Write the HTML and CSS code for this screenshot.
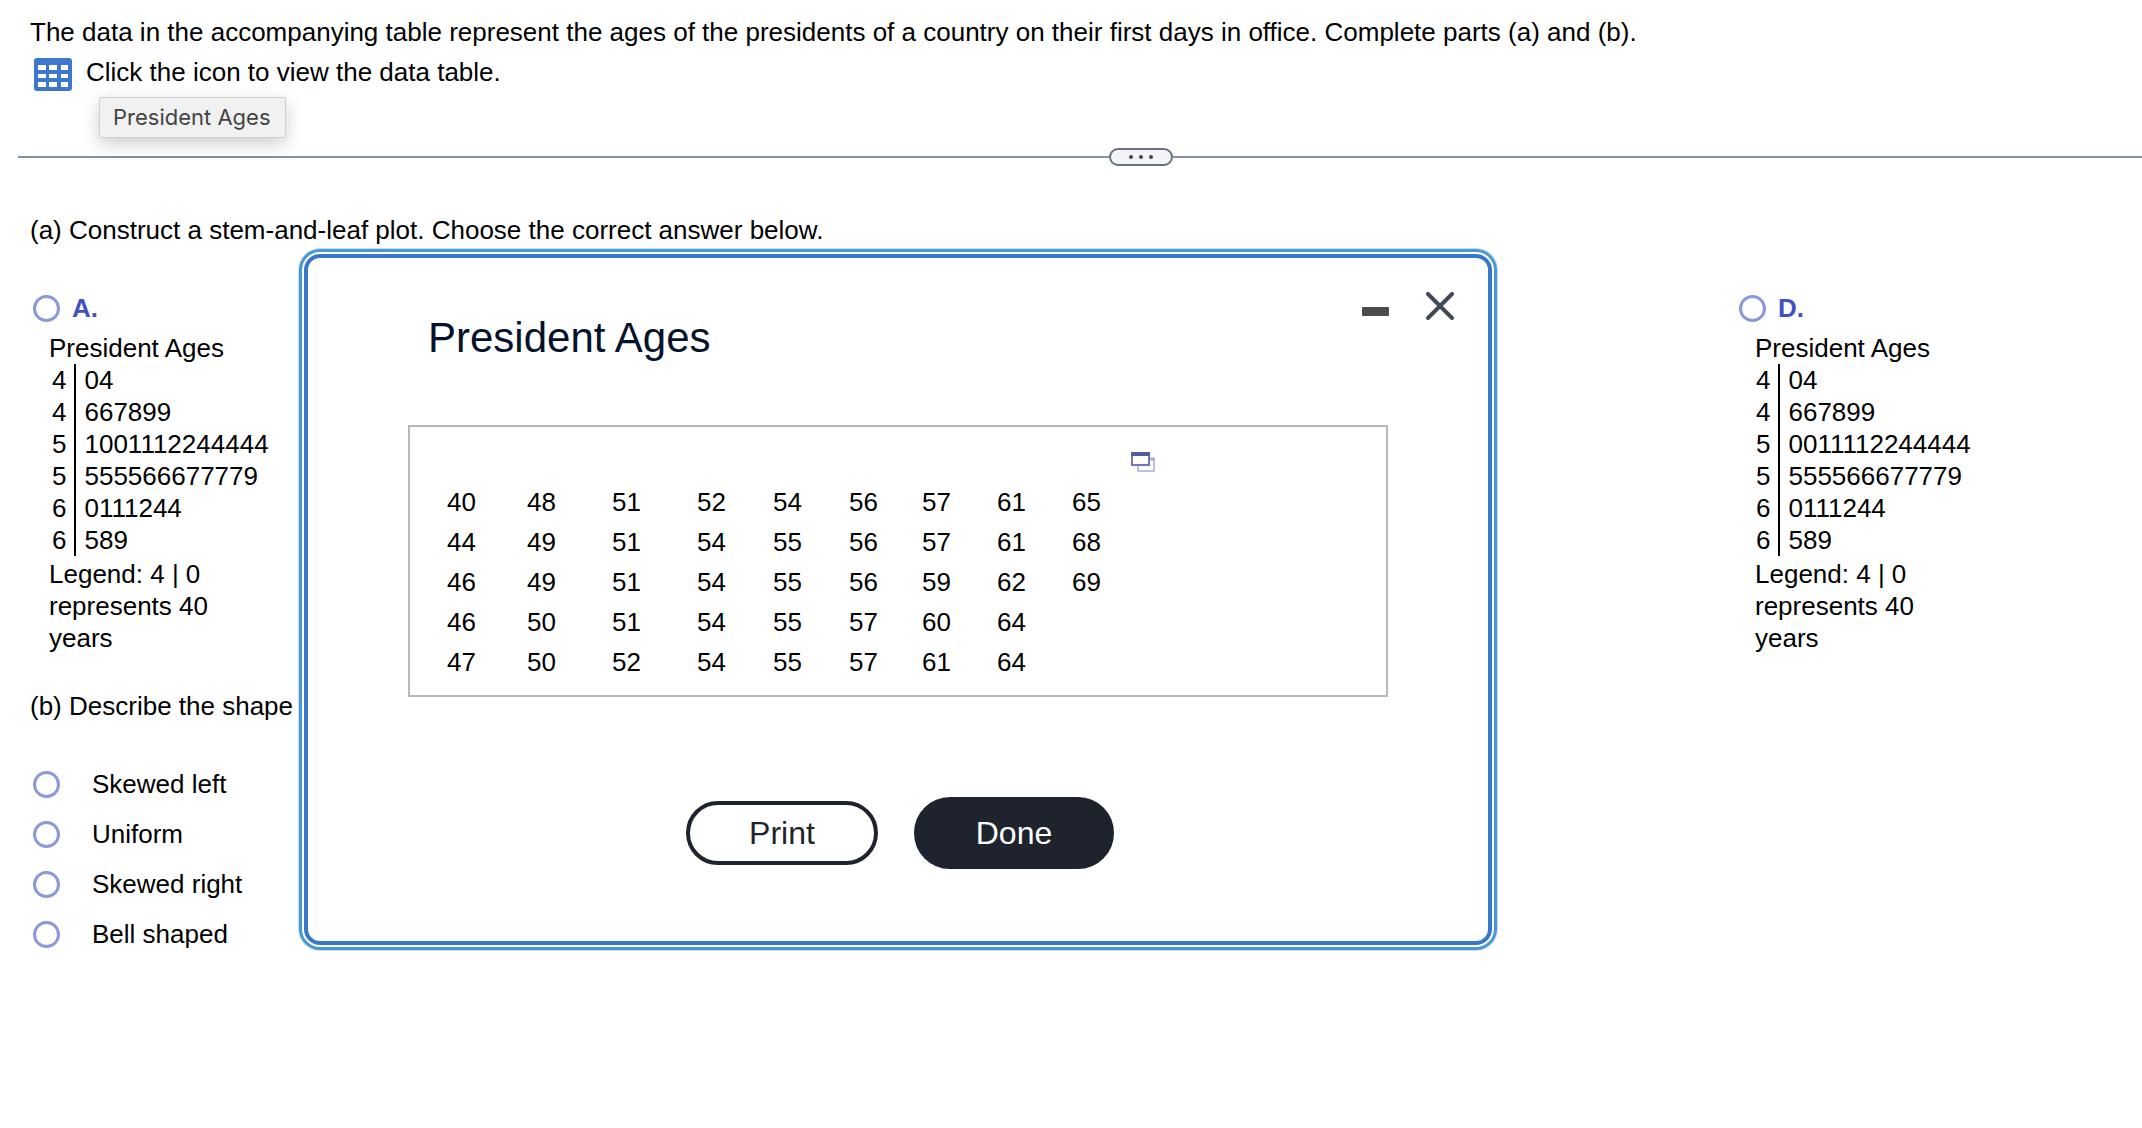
FILE: index.html
```html
<!DOCTYPE html>
<html lang="en">
  <head>
    <meta charset="UTF-8" />
    <meta name="viewport" content="width=device-width, initial-scale=1.0" />
    <title>President Ages</title>
    <link rel="stylesheet" href="styles.css" />
  </head>
  <body>
    <header class="question">
      <p>
        The data in the accompanying table represent the ages of the presidents
        of a country on their first days in office. Complete parts (a) and (b).
      </p>
      <div class="data-link">
        <button type="button" class="table-icon" aria-label="President Ages">
          <svg width="38" height="34" viewBox="0 0 38 34">
            <rect width="38" height="33" rx="3" fill="#3f76d0" />
            <g fill="#fff">
              <rect x="4" y="7" width="8" height="5" />
              <rect x="15" y="7" width="8" height="5" />
              <rect x="27" y="7" width="7" height="5" />
              <rect x="4" y="16" width="8" height="4" />
              <rect x="15" y="16" width="8" height="4" />
              <rect x="27" y="16" width="7" height="4" />
              <rect x="4" y="24" width="8" height="5" />
              <rect x="15" y="24" width="8" height="5" />
              <rect x="27" y="24" width="7" height="5" />
            </g>
          </svg>
        </button>
        <p>Click the icon to view the data table.</p>
        <div class="tooltip" role="tooltip">President Ages</div>
      </div>
    </header>

    <div class="divider">
      <span class="line line-left"></span>
      <button type="button" class="handle" aria-label="Resize">
        <span class="dot"></span>
        <span class="dot"></span>
        <span class="dot"></span>
      </button>
      <span class="line line-right"></span>
    </div>

    <main class="answers">
      <p>(a) Construct a stem-and-leaf plot. Choose the correct answer below.</p>
      <div class="choices">
        <div class="choice">
          <label class="choice-label">
            <input type="radio" name="plot" value="A" />
            A.
          </label>
          <div class="plot">
            <p>President Ages</p>
            <table class="stem-leaf">
              <tr><th>4</th><td>04</td></tr>
              <tr><th>4</th><td>667899</td></tr>
              <tr><th>5</th><td>1001112244444</td></tr>
              <tr><th>5</th><td>555566677779</td></tr>
              <tr><th>6</th><td>0111244</td></tr>
              <tr><th>6</th><td>589</td></tr>
            </table>
            <p class="key">Legend: 4 | 0 represents 40 years</p>
          </div>
        </div>
        <div class="choice choice-last">
          <label class="choice-label">
            <input type="radio" name="plot" value="D" />
            D.
          </label>
          <div class="plot">
            <p>President Ages</p>
            <table class="stem-leaf">
              <tr><th>4</th><td>04</td></tr>
              <tr><th>4</th><td>667899</td></tr>
              <tr><th>5</th><td>0011112244444</td></tr>
              <tr><th>5</th><td>555566677779</td></tr>
              <tr><th>6</th><td>0111244</td></tr>
              <tr><th>6</th><td>589</td></tr>
            </table>
            <p class="key">Legend: 4 | 0 represents 40 years</p>
          </div>
        </div>
      </div>

      <p>(b) Describe the shape</p>
      <div class="shapes">
        <label><input type="radio" name="shape" value="left" />Skewed left</label>
        <label><input type="radio" name="shape" value="uniform" />Uniform</label>
        <label><input type="radio" name="shape" value="right" />Skewed right</label>
        <label><input type="radio" name="shape" value="bell" />Bell shaped</label>
      </div>
    </main>

    <div class="modal" role="dialog" aria-labelledby="modalTitle">
      <div class="modal-header">
        <h2 id="modalTitle">President Ages</h2>
        <div class="modal-controls">
          <button type="button" aria-label="Minimize">
            <svg width="28" height="28" viewBox="0 0 28 28">
              <rect y="15" width="27" height="9" rx="1" fill="#4c4c4c" />
            </svg>
          </button>
          <button type="button" aria-label="Close">
            <svg width="28" height="28" viewBox="0 0 28 28">
              <path d="M2 2L26 26M26 2L2 26" stroke="#414b57" stroke-width="4" stroke-linecap="round" />
            </svg>
          </button>
        </div>
      </div>
      <div class="data-box">
        <table class="ages">
          <tr><td>40</td><td>48</td><td>51</td><td>52</td><td>54</td><td>56</td><td>57</td><td>61</td><td>65</td></tr>
          <tr><td>44</td><td>49</td><td>51</td><td>54</td><td>55</td><td>56</td><td>57</td><td>61</td><td>68</td></tr>
          <tr><td>46</td><td>49</td><td>51</td><td>54</td><td>55</td><td>56</td><td>59</td><td>62</td><td>69</td></tr>
          <tr><td>46</td><td>50</td><td>51</td><td>54</td><td>55</td><td>57</td><td>60</td><td>64</td><td></td></tr>
          <tr><td>47</td><td>50</td><td>52</td><td>54</td><td>55</td><td>57</td><td>61</td><td>64</td><td></td></tr>
        </table>
        <button type="button" class="copy" aria-label="Open data">
          <svg width="26" height="22" viewBox="0 0 26 22">
            <rect x="8" y="8" width="16" height="12" fill="#fff" stroke="#bcc0df" stroke-width="2" />
            <path d="M18 8h7" stroke="#a9aed5" stroke-width="3" />
            <rect x="2" y="2" width="17" height="12" fill="#fff" stroke="#7078b8" stroke-width="2" />
            <path d="M1 3h19" stroke="#515ca6" stroke-width="4" />
          </svg>
        </button>
      </div>
      <div class="modal-footer">
        <button type="button" class="btn-print">Print</button>
        <button type="button" class="btn-done">Done</button>
      </div>
    </div>
  </body>
</html>
```

FILE: styles.css
```css
* {
  box-sizing: border-box;
}

body {
  position: relative;
  margin: 0;
  font-family: "Liberation Sans", Arial, sans-serif;
  font-size: 26px;
  line-height: 32px;
  color: #000;
  background-color: #fff;
}

p,
h2 {
  margin: 0;
}

button {
  padding: 0;
  border: none;
  background: none;
  font-family: inherit;
  cursor: pointer;
}

svg {
  display: block;
}

/* question */
.question {
  padding: 16px 30px 0;
}

.data-link {
  position: relative;
  display: flex;
  gap: 14px;
  height: 36px;
  margin-top: 8px;
  padding-left: 4px;
}

.table-icon {
  display: flex;
  align-items: flex-end;
}

.tooltip {
  position: absolute;
  top: 41px;
  left: 69px;
  padding: 3px 14px 4px 13px;
  border: 1px solid #cfcfcf;
  border-radius: 2px;
  background-color: #f1f1f1;
  box-shadow: 0 6px 18px rgba(0, 0, 0, 0.2);
  color: #444;
  font-family: Inter, sans-serif;
  font-size: 22px;
}

/* divider with drag handle */
.divider {
  display: flex;
  align-items: center;
  margin: 56px 0 48px 18px;
}

.line {
  height: 2px;
  background-color: #8891a4;
}

.line-left {
  flex: 9;
}

.line-right {
  flex: 8;
}

.handle {
  display: flex;
  justify-content: center;
  align-items: center;
  gap: 6px;
  width: 64px;
  height: 18px;
  border: 2px solid #657280;
  border-radius: 9px;
  background-color: #f3f4f6;
}

.dot {
  width: 4px;
  height: 4px;
  border-radius: 50%;
  background-color: #444;
}

/* answers */
.answers {
  padding-left: 30px;
}

.answers input {
  appearance: none;
  width: 27px;
  height: 27px;
  margin: 0;
  border: 3px solid #8c98dd;
  border-radius: 50%;
  background-color: #fff;
}

.choices {
  display: flex;
  justify-content: space-between;
  margin: 46px 0 36px;
  padding-left: 3px;
}

.choice-last {
  width: 403px;
}

.choice-label {
  display: flex;
  align-items: center;
  gap: 12px;
  margin-bottom: 8px;
  color: #3f52c4;
  font-weight: bold;
}

.plot {
  padding-left: 16px;
}

.stem-leaf {
  margin-bottom: 2px;
  border-collapse: collapse;
}

.stem-leaf th,
.stem-leaf td {
  padding: 0 8px 0 3px;
  font-weight: normal;
  text-align: left;
}

.stem-leaf th {
  border-right: 2px solid #000;
}

.stem-leaf td {
  padding-left: 8px;
}

.choice-last th {
  padding-left: 1px;
}

.key {
  width: 180px;
}

.shapes {
  display: flex;
  flex-direction: column;
  margin-top: 37px;
  padding-left: 3px;
}

.shapes label {
  display: flex;
  align-items: center;
  gap: 32px;
  height: 50px;
}

/* modal */
.modal {
  position: absolute;
  top: 254px;
  left: 304px;
  width: calc(100% - 340px);
  max-width: 1188px;
  padding: 34px 100px 72px;
  border: 4px solid #3779c8;
  border-radius: 16px;
  background-color: #fff;
  box-shadow: 0 0 0 2px #fff, 0 0 0 5px #4a98d3, 0 0 0 6px #c3dff0;
}

.modal-header {
  display: flex;
  justify-content: space-between;
  padding-left: 20px;
}

.modal-header h2 {
  padding-top: 22px;
  color: #04122b;
  font-size: 42px;
  font-weight: normal;
  line-height: 48px;
}

.modal-controls {
  display: flex;
  align-items: flex-start;
  gap: 36px;
  margin-right: -66px;
}

.data-box {
  display: flex;
  align-items: flex-start;
  margin-top: 63px;
  padding: 24px 37px 13px;
  border: 2px solid #b8b8b8;
}

.ages {
  margin-top: 31px;
  border-collapse: collapse;
}

.ages td {
  width: 76px;
  height: 40px;
  padding: 0;
}

.ages td:nth-child(1) {
  width: 80px;
}

.ages td:nth-child(2),
.ages td:nth-child(3) {
  width: 85px;
}

.ages td:nth-child(6) {
  width: 73px;
}

.ages td:nth-child(7),
.ages td:nth-child(8) {
  width: 75px;
}

.ages td:nth-child(9) {
  width: 58px;
}

.modal-footer {
  display: flex;
  justify-content: center;
  align-items: center;
  gap: 36px;
  margin-top: 100px;
  padding-left: 4px;
}

.btn-print,
.btn-done {
  width: 192px;
  height: 64px;
  border: 4px solid #1f232e;
  border-radius: 36px;
  color: #1f232e;
  font-size: 32px;
}

.btn-done {
  width: 200px;
  height: 72px;
  background-color: #1f232e;
  color: #fff;
}
```
